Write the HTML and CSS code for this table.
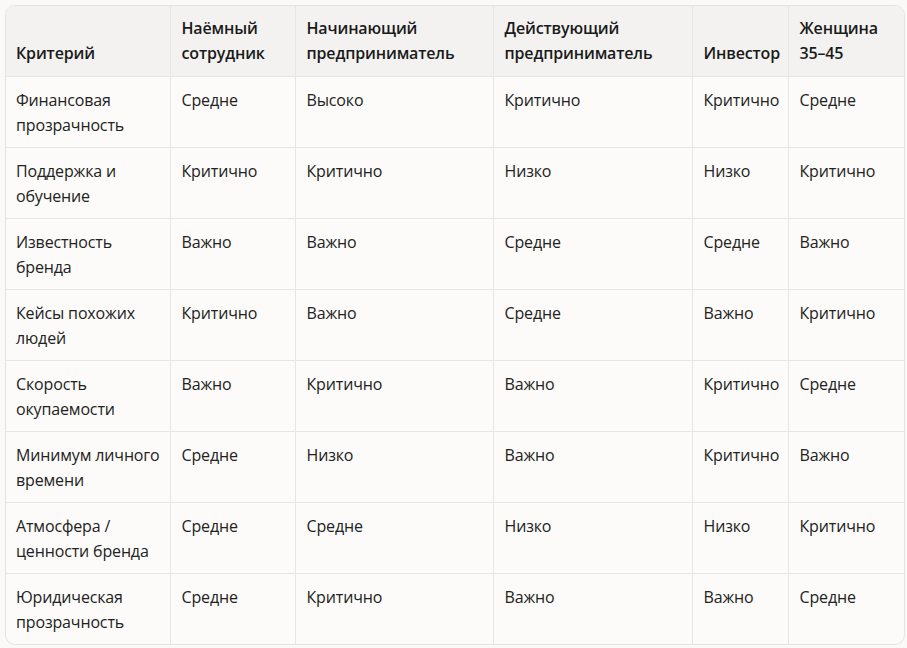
FILE: index.html
```html
<!DOCTYPE html>
<html lang="ru">
<head>
<meta charset="utf-8">
<link rel="stylesheet" href="styles.css">
</head>
<body>
<div class="wrap">
<table class="grid">
<colgroup>
<col class="c1"><col class="c2"><col class="c3"><col class="c4"><col class="c5"><col class="c6">
</colgroup>
<thead>
<tr><th>Критерий</th><th>Наёмный сотрудник</th><th>Начинающий предприниматель</th><th>Действующий предприниматель</th><th>Инвестор</th><th>Женщина 35–45</th></tr>
</thead>
<tbody>
<tr><td>Финансовая прозрачность</td><td>Средне</td><td>Высоко</td><td>Критично</td><td>Критично</td><td>Средне</td></tr>
<tr><td>Поддержка и обучение</td><td>Критично</td><td>Критично</td><td>Низко</td><td>Низко</td><td>Критично</td></tr>
<tr><td>Известность бренда</td><td>Важно</td><td>Важно</td><td>Средне</td><td>Средне</td><td>Важно</td></tr>
<tr><td>Кейсы похожих людей</td><td>Критично</td><td>Важно</td><td>Средне</td><td>Важно</td><td>Критично</td></tr>
<tr><td>Скорость окупаемости</td><td>Важно</td><td>Критично</td><td>Важно</td><td>Критично</td><td>Средне</td></tr>
<tr><td>Минимум личного времени</td><td>Средне</td><td>Низко</td><td>Важно</td><td>Критично</td><td>Важно</td></tr>
<tr><td>Атмосфера / ценности бренда</td><td>Средне</td><td>Средне</td><td>Низко</td><td>Низко</td><td>Критично</td></tr>
<tr><td>Юридическая прозрачность</td><td>Средне</td><td>Критично</td><td>Важно</td><td>Важно</td><td>Средне</td></tr>
</tbody>
</table>
</div>
</body>
</html>
```
FILE: styles.css
```css
html, body { margin: 0; padding: 0; background: #faf9f7; }
body { font-family: "Open Sans", "Noto Sans", sans-serif; color: #1f1f1f; }
.wrap {
  margin: 5px 2px 0 5px;
  width: 898px;
  border: 1px solid #e6e4e0;
  border-radius: 10px;
  overflow: hidden;
  background: #fcfbf9;
}
.grid { width: 100%; border-collapse: collapse; table-layout: fixed; }
.c1 { width: 164px; }
.c2 { width: 125px; }
.c3 { width: 198px; }
.c4 { width: 199px; }
.c5 { width: 96px; }
.c6 { width: auto; }
th, td {
  text-align: left;
  font-size: 16px;
  line-height: 25px;
  letter-spacing: -0.15px;
  padding: 11px 2px 9px 11px;
  border-right: 1px solid #e8e6e2;
  border-bottom: 1px solid #e8e6e2;
}
th:first-child, td:first-child { padding-left: 10px; }
th:last-child, td:last-child { border-right: none; }
tbody tr:last-child td { border-bottom: none; }
th {
  background: #f3f2f0;
  font-weight: 600;
  vertical-align: bottom;
  color: #1a1a1a;
  padding-top: 10px;
  padding-bottom: 10px;
}
td { vertical-align: top; font-weight: 400; color: #222; height: 50px; }
```
